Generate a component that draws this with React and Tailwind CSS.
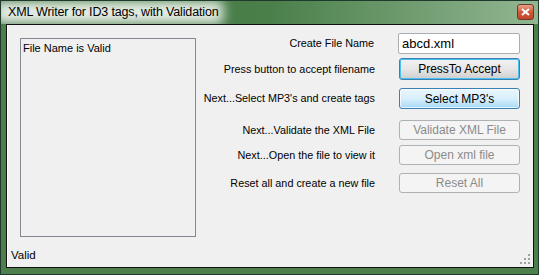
import React from "react";

const font = { fontFamily: '"Liberation Sans", Arial, sans-serif' };

const rows = [
  { label: "Create File Name", kind: "input", value: "abcd.xml", mt: "mt-0" },
  { label: "Press button to accept filename", kind: "focus", value: "PressTo Accept", mt: "mt-[4px]" },
  { label: "Next...Select MP3's and create tags", kind: "hover", value: "Select MP3's", mt: "mt-[8px]" },
  { label: "Next...Validate the XML File", kind: "disabled", value: "Validate XML File", mt: "mt-[11px]" },
  { label: "Next...Open the file to view it", kind: "disabled", value: "Open xml file", mt: "mt-[5px]" },
  { label: "Reset all and create a new file", kind: "disabled", value: "Reset All", mt: "mt-[8px]" },
];

function Control({ kind, value }) {
  if (kind === "input") {
    return (
      <div className="w-[122px] h-[21px] bg-white border border-[#abadb3] rounded-[2px] flex items-center pl-[3px] text-[13px] text-black">
        {value}
      </div>
    );
  }
  if (kind === "disabled") {
    return (
      <div className="w-[121px] h-[20px] border border-[#adb2b5] rounded-[3px] bg-[#f4f4f4] flex items-center justify-center text-[12px] text-[#8b8b8b]">
        {value}
      </div>
    );
  }
  if (kind === "hover") {
    return (
      <div className="w-[121px] h-[21px] border border-[#3c7fb1] rounded-[3px] bg-gradient-to-b from-[#eaf6fd] via-[#d9f0fc] to-[#a7d9f5] flex items-center justify-center text-[12px] text-black shadow-[inset_0_0_0_1px_rgba(255,255,255,0.7)]">
        {value}
      </div>
    );
  }
  return (
    <div className="w-[121px] h-[22px] border border-[#3c7fb1] rounded-[3px] bg-gradient-to-b from-[#f2f2f2] via-[#e6e6e6] to-[#cfcfcf] flex items-center justify-center text-[12px] text-black shadow-[inset_0_0_0_1px_#48c0f0]">
      {value}
    </div>
  );
}

export default function App() {
  return (
    <div style={font} className="w-[539px] h-[275px] bg-[#4c7f4c] border border-[#1f3a2c] flex flex-col">
      {/* title bar */}
      <div className="h-[23px] flex items-center justify-between bg-gradient-to-r from-[#3f743f] via-[#4a7f4a] to-[#92b692] relative overflow-hidden">
        <div className="absolute inset-y-0 left-0 w-[228px] bg-[#e6ede6] blur-[6px] -ml-[6px]" />
        <span className="relative pl-[7px] text-[12.5px] text-black tracking-[-0.15px]">
          XML Writer for ID3 tags, with Validation
        </span>
        <div className="relative mr-[4px] mt-[-2px] w-[17px] h-[16px] rounded-[3px] border border-[#6e3a2a] bg-gradient-to-b from-[#e9a18b] via-[#d2583a] to-[#c4452a] flex items-center justify-center">
          <svg width="9" height="8" viewBox="0 0 9 8">
            <path d="M1 1 L8 7 M8 1 L1 7" stroke="#ffffff" strokeWidth="2" />
          </svg>
        </div>
      </div>
      {/* client */}
      <div className="flex-1 ml-[5px] mr-[4px] mb-[6px] border border-[#111] bg-[#f0f0f0] shadow-[inset_1px_0_0_#fff] flex flex-col relative">
        <div className="flex flex-1">
          <div className="ml-[13px] mt-[13px] w-[176px] h-[199px] border border-[#828790] px-[2px] pt-[1px] text-[11px] text-black">
            File Name is Valid
          </div>
          <div className="flex-1 flex flex-col items-end pt-[8px] pr-[13px]">
            {rows.map((r) => (
              <div key={r.label} className={`flex items-center ${r.mt}`}>
                <span className="text-[10.8px] text-black mr-[24px]">{r.label}</span>
                <Control kind={r.kind} value={r.value} />
              </div>
            ))}
          </div>
        </div>
        <div className="h-[22px] pl-[4px] flex items-center text-[11.5px] text-black">Valid</div>
        <svg className="absolute right-[3px] bottom-[3px]" width="10" height="10" viewBox="0 0 10 10">
          <rect x="8" y="0" width="2" height="2" fill="#a0a0a0" />
          <rect x="4" y="4" width="2" height="2" fill="#a0a0a0" />
          <rect x="8" y="4" width="2" height="2" fill="#a0a0a0" />
          <rect x="0" y="8" width="2" height="2" fill="#a0a0a0" />
          <rect x="4" y="8" width="2" height="2" fill="#a0a0a0" />
          <rect x="8" y="8" width="2" height="2" fill="#a0a0a0" />
        </svg>
      </div>
    </div>
  );
}
